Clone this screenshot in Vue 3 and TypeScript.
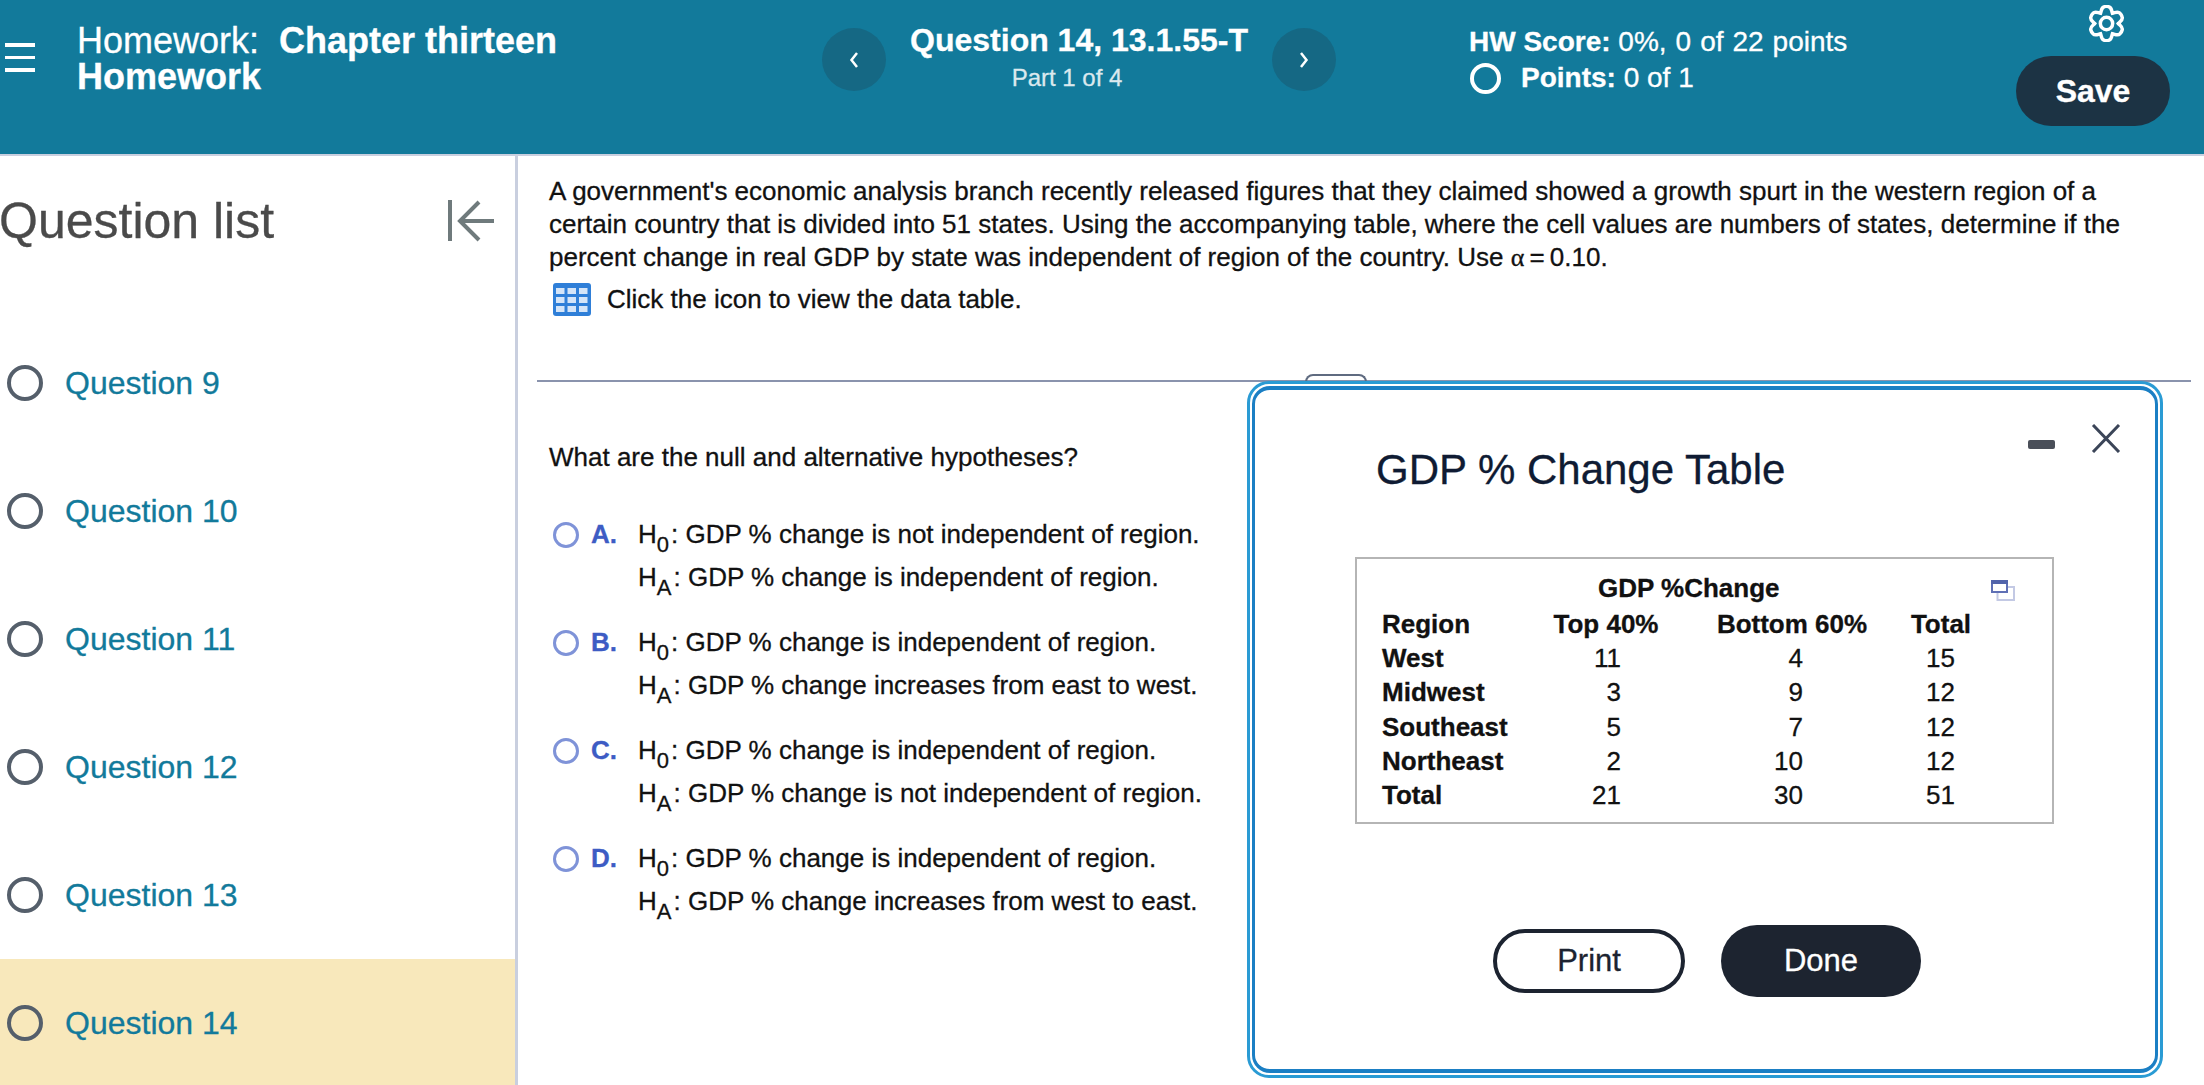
<script setup lang="ts">
const questions = [9, 10, 11, 12, 13, 14];

const options = [
  { key: "A.", h0: "GDP % change is not independent of region.", ha: "GDP % change is independent of region." },
  { key: "B.", h0: "GDP % change is independent of region.", ha: "GDP % change increases from east to west." },
  { key: "C.", h0: "GDP % change is independent of region.", ha: "GDP % change is not independent of region." },
  { key: "D.", h0: "GDP % change is independent of region.", ha: "GDP % change increases from west to east." },
];

const rows = [
  ["West", "11", "4", "15"],
  ["Midwest", "3", "9", "12"],
  ["Southeast", "5", "7", "12"],
  ["Northeast", "2", "10", "12"],
  ["Total", "21", "30", "51"],
];

// six lobed gear outline, one lobe straight up
function gearPath() {
  const c = 18;
  const pts: string[] = [];
  for (let i = 0; i < 6; i++) {
    const a = (-90 + i * 60) * (Math.PI / 180);
    const step = (Math.PI / 180) * 30;
    const p = (r: number, t: number) =>
      `${(c + r * Math.cos(t)).toFixed(2)} ${(c + r * Math.sin(t)).toFixed(2)}`;
    if (i === 0) pts.push(`M${p(11.5, a - step)}`);
    pts.push(`C${p(13.5, a - step * 0.7)} ${p(16.5, a - step * 0.6)} ${p(16.5, a - step * 0.25)}`);
    pts.push(`Q${p(17, a)} ${p(16.5, a + step * 0.25)}`);
    pts.push(`C${p(16.5, a + step * 0.6)} ${p(13.5, a + step * 0.7)} ${p(11.5, a + step)}`);
  }
  return pts.join(" ") + "Z";
}
const gear = gearPath();
</script>

<template>
  <div class="page">
    <header class="topbar">
      <div class="burger"><i></i><i></i><i></i></div>
      <div class="hw-title">Homework:&nbsp; <b>Chapter thirteen<br />Homework</b></div>
      <button class="nav-btn">
        <svg width="12" height="18" viewBox="0 0 12 18"><path d="M9 2 3.5 9 9 16" /></svg>
      </button>
      <div class="q-title">
        <div class="q-name">Question 14, 13.1.55-T</div>
        <div class="q-part">Part 1 of 4</div>
      </div>
      <button class="nav-btn">
        <svg width="12" height="18" viewBox="0 0 12 18"><path d="M3 2 8.500 9 3 16" /></svg>
      </button>
      <div class="score">
        <div><b>HW Score:</b> <span class="score-val">0%, 0 of 22 points</span></div>
        <div class="points"><span class="ring"></span><span><b>Points:</b> 0 of 1</span></div>
      </div>
      <div class="actions">
        <svg class="gear" width="37" height="37" viewBox="0 0 36 36" fill="none" stroke="#fff" stroke-width="3.4">
          <path :d="gear" />
          <circle cx="18" cy="18" r="6" />
        </svg>
        <button class="save">Save</button>
      </div>
    </header>

    <main class="body">
      <aside class="sidebar">
        <div class="side-head">
          <h2>Question list</h2>
          <svg width="46" height="42" viewBox="0 0 46 42" fill="none" stroke="#6f7a7c" stroke-width="4">
            <path d="M2 0V41" />
            <path d="M46 21H12M31 2 12 21 31 40" />
          </svg>
        </div>
        <ul class="q-list">
          <li v-for="q in questions" :key="q" :class="{ current: q === 14 }">
            <span class="q-radio"></span>
            <span>Question {{ q }}</span>
          </li>
        </ul>
      </aside>

      <section class="content">
        <p class="intro">
          A government's economic analysis branch recently released figures that they claimed showed a growth spurt in the western region of a<br />
          certain country that is divided into 51 states. Using the accompanying table, where the cell values are numbers of states, determine if the<br />
          percent change in real GDP by state was independent of region of the country. Use <span class="alpha">α</span>&#8201;=&#8201;0.10.
        </p>
        <div class="data-link">
          <svg width="38" height="33" viewBox="0 0 38 33">
            <rect width="38" height="33" rx="3" fill="#2f7fd8" />
            <g fill="#d5e5f8">
              <template v-for="r in 3" :key="r">
                <rect v-for="c in 3" :key="c" :x="3 + (c - 1) * 11.5" :y="5 + (r - 1) * 9" width="8.500" height="6" />
              </template>
            </g>
          </svg>
          <span>Click the icon to view the data table.</span>
        </div>
        <hr class="rule" />
        <p class="prompt">What are the null and alternative hypotheses?</p>
        <div class="options">
          <div v-for="o in options" :key="o.key" class="option">
            <span class="opt-radio"></span>
            <b class="opt-key">{{ o.key }}</b>
            <div class="opt-text">
              <div>H<sub>0</sub>: {{ o.h0 }}</div>
              <div>H<sub>A</sub>: {{ o.ha }}</div>
            </div>
          </div>
        </div>
      </section>
    </main>

    <div class="tab"></div>
    <div class="modal">
      <div class="modal-tools">
        <span class="minus"></span>
        <svg width="30" height="29" viewBox="0 0 30 29" fill="none" stroke="#3b4558" stroke-width="3">
          <path d="M2 1 28 28M28 1 2 28" />
        </svg>
      </div>
      <div class="modal-inner">
        <h1 class="modal-title">GDP % Change Table</h1>
        <div class="table-box">
          <svg class="restore" width="24" height="21" viewBox="0 0 24 21" fill="none">
            <rect x="6.500" y="7" width="16.500" height="13" stroke="#c3c9e4" stroke-width="2" />
            <rect x="1" y="1" width="15" height="11" fill="#fff" stroke="#5f70b5" stroke-width="2" />
            <rect x="0" y="0" width="17" height="4" fill="#5264ab" />
          </svg>
          <div class="tbl-caption">GDP %Change</div>
          <div class="tbl">
            <b>Region</b><b class="mid">Top 40%</b><b class="mid">Bottom 60%</b><b class="mid">Total</b>
            <template v-for="row in rows" :key="row[0]">
              <b>{{ row[0] }}</b>
              <span class="n1">{{ row[1] }}</span>
              <span class="n2">{{ row[2] }}</span>
              <span class="n3">{{ row[3] }}</span>
            </template>
          </div>
        </div>
        <div class="modal-btns">
          <button class="print">Print</button>
          <button class="done">Done</button>
        </div>
      </div>
    </div>
  </div>
</template>

<style>
html,
body {
  margin: 0;
  overflow: hidden;
}
</style>

<style scoped>
.page {
  position: relative;
  width: 2204px;
  height: 1085px;
  overflow: hidden;
  background: #fff;
  font-family: "Liberation Sans", Arial, sans-serif;
  color: #111;
  -webkit-text-stroke: 0.3px;
}

button {
  font-family: inherit;
  border: none;
  padding: 0;
}

.topbar {
  display: flex;
  align-items: flex-start;
  height: 154px;
  background: #127a9b;
  border-bottom: 2px solid #c9cfdf;
  color: #fff;
}

.burger {
  display: flex;
  flex-direction: column;
  gap: 9px;
  width: 30px;
  margin: 43px 0 0 5px;
}

.burger i {
  height: 3.5px;
  background: #fff;
}

.hw-title {
  width: 745px;
  margin: 23px 0 0 42px;
  font-size: 36px;
  line-height: 36px;
}

.nav-btn {
  display: flex;
  align-items: center;
  justify-content: center;
  flex: none;
  width: 64px;
  height: 63px;
  margin-top: 28px;
  border-radius: 50%;
  background: #156884;
}

.nav-btn path {
  fill: none;
  stroke: #fff;
  stroke-width: 2.5;
}

.q-title {
  width: 386px;
  margin-top: 21px;
  text-align: center;
}

.q-name {
  font-size: 32px;
  line-height: 38px;
  font-weight: 700;
}

.q-part {
  margin: 5px 24px 0 0;
  font-size: 24px;
  line-height: 28px;
  color: #dbe9ee;
}

.score {
  width: 547px;
  margin: 24px 0 0 133px;
  font-size: 28px;
  line-height: 36px;
}

.score-val {
  word-spacing: 1.2px;
}

.points {
  display: flex;
  align-items: center;
  gap: 20px;
  padding-left: 1px;
}

.ring {
  width: 31px;
  height: 31px;
  box-sizing: border-box;
  border: 4px solid #fff;
  border-radius: 50%;
}

.actions {
  display: flex;
  flex-direction: column;
  width: 154px;
}

.gear {
  margin: 5px 0 0 72px;
}

.save {
  width: 154px;
  height: 70px;
  margin-top: 14px;
  border-radius: 35px;
  background: #1c3344;
  color: #fff;
  font-size: 32px;
  font-weight: 700;
}

.body {
  display: flex;
  height: 929px;
}

.sidebar {
  flex: none;
  width: 518px;
  box-sizing: border-box;
  border-right: 3px solid #c9cfdf;
}

.side-head {
  display: flex;
  align-items: center;
  justify-content: space-between;
  height: 126px;
  padding: 2px 21px 0 0;
}

.side-head h2 {
  margin: 0 0 0 -1px;
  font-size: 50px;
  font-weight: 400;
  color: #4a4a4a;
}

.q-list {
  margin: 35px 0 0;
  padding: 0;
  list-style: none;
}

.q-list li {
  display: flex;
  align-items: center;
  gap: 22px;
  height: 128px;
  padding-left: 7px;
  font-size: 32px;
  color: #127a9b;
}

.q-list li.current {
  background: #f8e8bb;
}

.q-radio {
  width: 36px;
  height: 36px;
  box-sizing: border-box;
  border: 4px solid #555f6b;
  border-radius: 50%;
}

.content {
  flex: 1;
  padding-left: 19px;
  font-size: 26px;
}

.intro {
  margin: 19px 0 0 12px;
  line-height: 33px;
}

.alpha {
  font-family: "Liberation Serif", serif;
}

.data-link {
  display: flex;
  align-items: center;
  gap: 16px;
  height: 34px;
  margin: 8px 0 0 16px;
}

.rule {
  width: 1654px;
  height: 2px;
  margin: 64px 0 0;
  border: none;
  background: #8a93ad;
}

.prompt {
  margin: 60px 0 0 12px;
  line-height: 30px;
}

.options {
  display: flex;
  flex-direction: column;
  gap: 22px;
  margin: 41px 0 0 16px;
}

.option {
  position: relative;
  display: flex;
  line-height: 43px;
}

.opt-radio {
  flex: none;
  width: 26px;
  height: 26px;
  margin: 9px 12px 0 0;
  box-sizing: border-box;
  border: 3px solid #7f93d8;
  border-radius: 50%;
}

.opt-key {
  flex: none;
  width: 47px;
  color: #3d5cc4;
}

.opt-text sub {
  padding-right: 2px;
  font-size: 22px;
  line-height: 0;
  vertical-align: -9px;
}

.tab {
  position: absolute;
  left: 1305px;
  top: 374px;
  width: 58px;
  height: 8px;
  border: 2px solid #5f6b80;
  border-bottom: none;
  border-radius: 8px 8px 0 0;
}

.modal {
  position: absolute;
  left: 1247px;
  top: 381px;
  width: 916px;
  height: 697px;
  box-sizing: border-box;
  padding: 2px;
  border: 3px solid #2a9bd4;
  border-radius: 22px;
  background: #fff;
}

.modal-inner {
  height: 100%;
  box-sizing: border-box;
  border: solid #1b7fc4;
  border-width: 4px 3px;
  border-radius: 18px;
}

.modal-tools {
  position: absolute;
  top: 40px;
  right: 39px;
  display: flex;
  align-items: flex-end;
  gap: 36px;
}

.minus {
  width: 27px;
  height: 9px;
  margin-bottom: 4px;
  border-radius: 2px;
  background: #4a4f59;
}

.modal-title {
  margin: 55px 0 0 121px;
  font-size: 42px;
  line-height: 50px;
  font-weight: 400;
  color: #0f1b33;
}

.table-box {
  position: relative;
  width: 699px;
  height: 267px;
  margin: 62px 0 0 100px;
  box-sizing: border-box;
  padding: 12px 0 0 25px;
  border: 2px solid #b5b5b5;
  font-size: 26px;
  line-height: 34px;
}

.restore {
  position: absolute;
  top: 21px;
  left: 634px;
}

.tbl-caption {
  padding-left: 216px;
  font-weight: 700;
}

.tbl {
  display: grid;
  grid-template-columns: 144px 160px 212px 86px;
  grid-auto-rows: 34.2px;
  margin-top: 2px;
}

.tbl .mid {
  text-align: center;
}

.n1,
.n2,
.n3 {
  text-align: right;
}

.n1 {
  padding-right: 65px;
}

.n2 {
  padding-right: 95px;
}

.n3 {
  padding-right: 29px;
}

.modal-btns {
  display: flex;
  align-items: center;
  gap: 36px;
  margin: 101px 0 0 238px;
}

.print {
  width: 192px;
  height: 64px;
  box-sizing: border-box;
  border: 4px solid #1c2330;
  border-radius: 32px;
  background: #fff;
  color: #1c2330;
  font-size: 31px;
}

.done {
  width: 200px;
  height: 72px;
  border-radius: 36px;
  background: #1d2430;
  color: #fff;
  font-size: 31px;
}
</style>
